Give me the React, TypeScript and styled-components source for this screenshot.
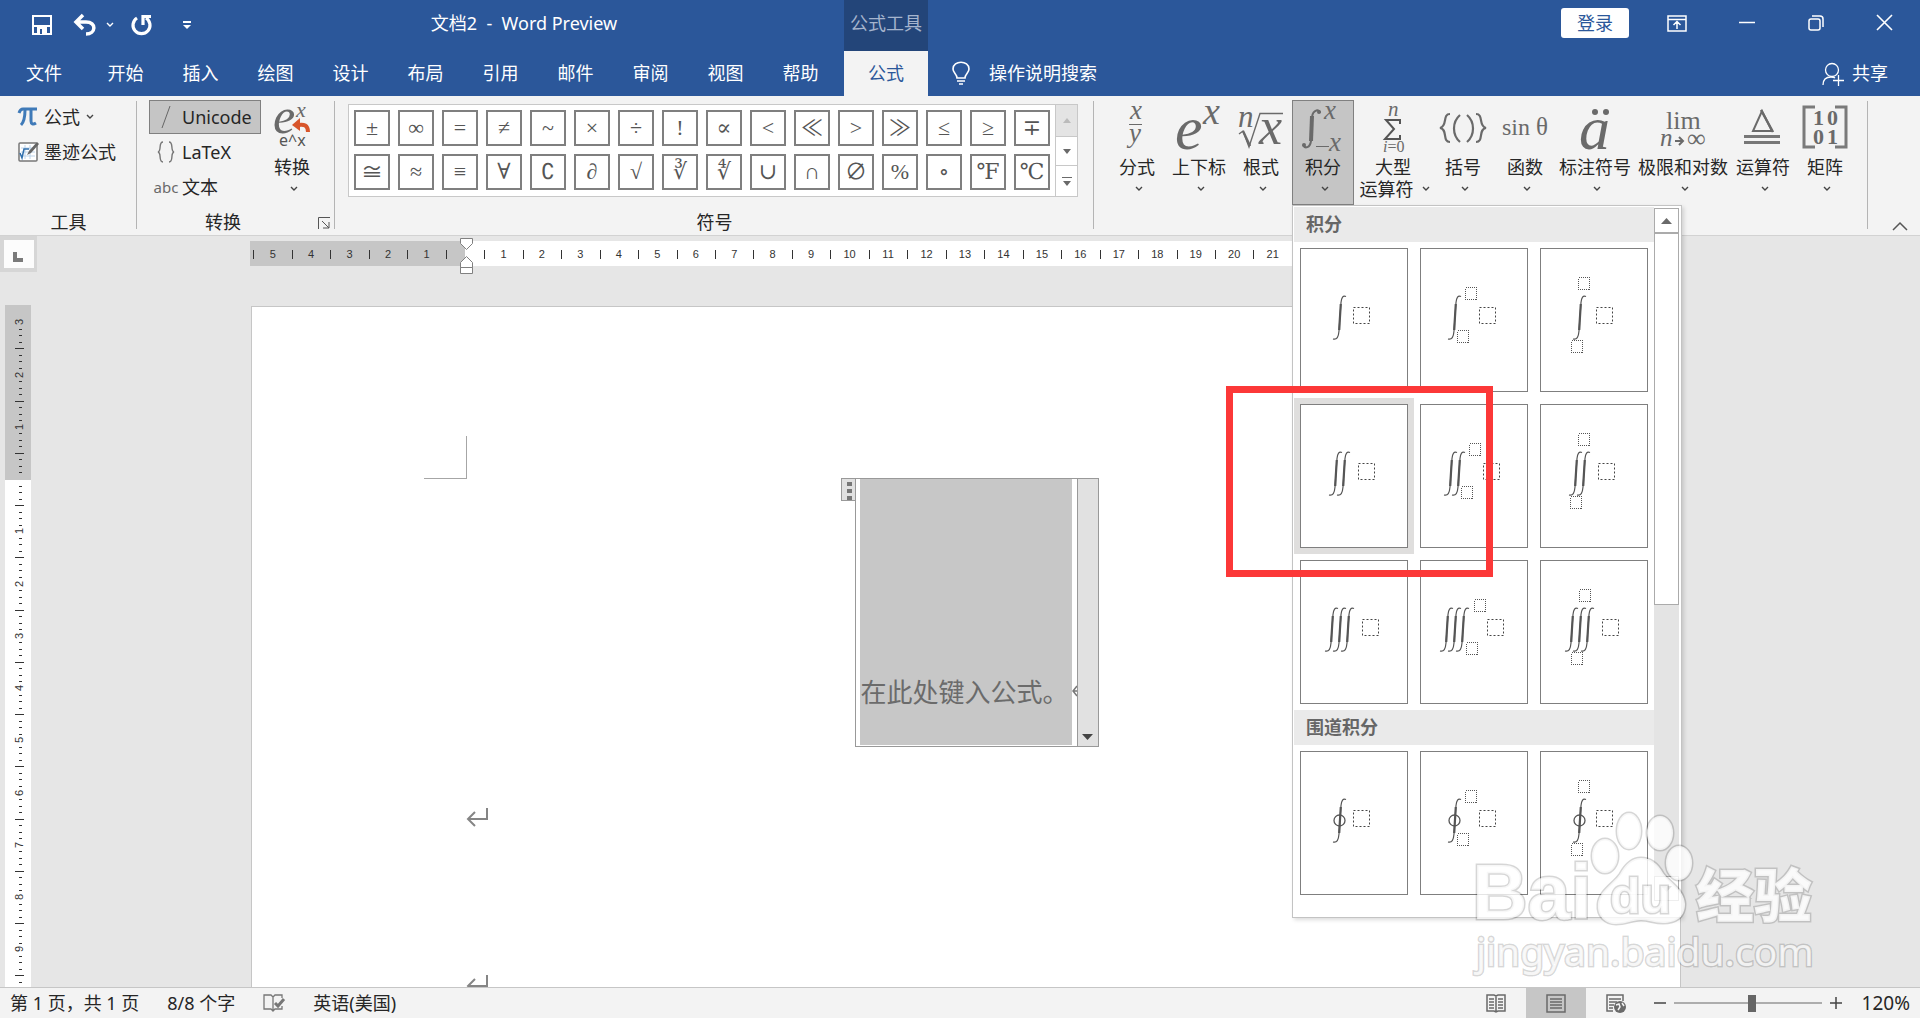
import React from "react";
import styled, { createGlobalStyle, css } from "styled-components";

const UI = `"Noto Sans", "Noto Sans CJK SC", sans-serif`;
const MATH = `"Liberation Serif", "DejaVu Serif", "Noto Sans CJK SC", serif`;

const GlobalStyle = createGlobalStyle`
  * { box-sizing: border-box; }
  body { margin: 0; background: #e6e6e6; }
  button { font: inherit; color: inherit; background: none; border: 0; padding: 0; }
  svg { display: block; flex: none; overflow: visible; }
`;

const App = styled.div`
  display: flex;
  flex-direction: column;
  height: 100vh;
  overflow: hidden;
  position: relative;
  font: 18px/22px ${UI};
  color: #262626;
  white-space: nowrap;
`;

/* ---------- header ---------- */

const TitleBar = styled.header`
  display: flex;
  flex: none;
  height: 51px;
  background: #2b579a;
  color: #fff;
`;

const QuickAccess = styled.div`
  display: flex;
  align-items: center;
  width: 204px;
  padding: 0 12px 2px 32px;
`;

const QuickButton = styled.button<{ $gap: number }>`
  margin-right: ${(p) => p.$gap}px;
`;

const Title = styled.h1`
  width: 640px;
  margin: 0;
  font: 18px/46px ${UI};
  text-align: center;
  white-space: pre;
`;

const ContextLabel = styled.div`
  width: 84px;
  background: #234579;
  color: #a5b4cd;
  line-height: 46px;
  text-align: center;
`;

const WindowControls = styled.div`
  display: flex;
  align-items: center;
  margin-left: auto;
  padding: 0 26px 5px 0;
`;

const Login = styled.button`
  width: 68px;
  height: 30px;
  margin-right: 38px;
  border-radius: 3px;
  background: #fff;
  color: #2b579a;
`;

const WindowButton = styled.button<{ $gap: number }>`
  margin-right: ${(p) => p.$gap}px;
`;

const TabBar = styled.nav`
  display: flex;
  flex: none;
  height: 45px;
  background: #2b579a;
  color: #fff;
`;

const Tab = styled.button<{ $kind?: "file" | "active" }>`
  width: 75px;
  padding-bottom: 2px;
  ${(p) => p.$kind === "file" && css`width: 88px;`}
  ${(p) =>
    p.$kind === "active" &&
    css`
      width: 84px;
      margin-left: 6px;
      background: #f3f3f3;
      color: #2b579a;
    `}
`;

const TellMe = styled.button`
  display: flex;
  align-items: center;
  gap: 19px;
  margin-left: 24px;
  padding-bottom: 2px;
`;

const Share = styled.button`
  display: flex;
  align-items: center;
  gap: 8px;
  margin-left: auto;
  padding: 0 32px 2px 0;
`;

/* ---------- ribbon ---------- */

const Ribbon = styled.section`
  display: flex;
  flex: none;
  height: 140px;
  padding-top: 4px;
  position: relative;
  z-index: 2;
  background: #f3f3f3;
  border-bottom: 1px solid #d2d2d2;
`;

const Group = styled.div<{ $width?: number; $pad: string }>`
  display: flex;
  flex-direction: column;
  position: relative;
  ${(p) => p.$width && css`width: ${p.$width}px;`}
  padding: ${(p) => p.$pad};
  &::after {
    content: "";
    position: absolute;
    right: 0;
    top: 1px;
    height: 128px;
    border-right: 1px solid #b4b4b4;
  }
`;

const GroupBody = styled.div`
  display: flex;
  height: 111px;
`;

const GroupLabel = styled.div<{ $end: number }>`
  padding-right: ${(p) => p.$end}px;
  text-align: center;
  line-height: 22px;
`;

const Stack = styled.div`
  display: flex;
  flex-direction: column;
`;

const RowButton = styled.button<{ $on?: boolean }>`
  display: flex;
  align-items: center;
  height: 34px;
  margin-bottom: 1px;
  gap: 6px;
  border: 1px solid transparent;
  ${(p) =>
    p.$on &&
    css`
      background: #c5c5c5;
      border-color: #808080;
    `}
`;

const ModeIcon = styled.span`
  display: flex;
  justify-content: center;
  width: 32px;
  color: #6a6a6a;
  font-size: 15px;
`;

const ModeRow = styled(RowButton)`
  gap: 0;
  width: 112px;
`;

const BigButton = styled.button<{ $width: number; $on?: boolean }>`
  display: flex;
  flex-direction: column;
  align-items: center;
  flex: none;
  width: ${(p) => p.$width}px;
  height: 105px;
  padding-top: 1px;
  border: 1px solid transparent;
  ${(p) =>
    p.$on &&
    css`
      background: #c5c5c5;
      border-color: #808080;
    `}
`;

const BigIcon = styled.span`
  display: block;
  height: 54px;
`;

const SecondLine = styled.span`
  display: flex;
  align-items: center;
  justify-content: center;
  gap: 8px;
  height: 22px;
  padding-left: 3px;
`;

const Launcher = styled.button`
  position: absolute;
  right: 5px;
  bottom: 6px;
`;

const Gallery = styled.div`
  display: flex;
  width: 730px;
  height: 93px;
  margin-top: 4px;
  background: #fff;
  border: 1px solid #c8c8c8;
`;

const SymbolGrid = styled.div`
  display: grid;
  grid-template-columns: repeat(16, 36px);
  grid-auto-rows: 36px;
  gap: 8px;
  flex: 1;
  padding: 5px;
`;

const SymbolButton = styled.button`
  border: 2px solid #7f7f7f;
  background: #fff;
  color: #555;
  font: 22px/30px ${MATH};
  text-align: center;
  overflow: hidden;
`;

const GallerySide = styled.div`
  display: grid;
  grid-template-rows: 31px 29px 31px;
  width: 23px;
  border-left: 1px solid #c8c8c8;
`;

const GalleryArrow = styled.button<{ $off?: boolean }>`
  display: grid;
  place-items: center;
  background: ${(p) => (p.$off ? "#e4e4e4" : "#fff")};
  & + & { border-top: 1px solid #c8c8c8; }
`;

const MenuHost = styled.div`
  position: relative;
`;

const Collapse = styled.button`
  margin: 121px 12px 0 auto;
  height: 10px;
`;

/* ---------- integral menu ---------- */

const Menu = styled.div`
  position: absolute;
  top: 105px;
  left: 0;
  display: flex;
  width: 390px;
  height: 713px;
  padding: 1px;
  background: #fff;
  border: 1px solid #c3c3c3;
  box-shadow: 2px 2px 4px rgba(0, 0, 0, 0.14);
`;

const MenuList = styled.div`
  width: 360px;
`;

const MenuHeading = styled.h2`
  margin: 0;
  height: 35px;
  padding-left: 12px;
  background: #eaeaea;
  color: #666;
  font: 700 18px/34px ${UI};
`;

const MenuGrid = styled.div`
  display: grid;
  grid-template-columns: repeat(3, 120px);
  grid-auto-rows: 156px;
`;

const MenuItem = styled.button<{ $hot?: boolean }>`
  padding: 6px;
  background: ${(p) => (p.$hot ? "#dfdedd" : "#fff")};
`;

const Preview = styled.svg`
  width: 108px;
  height: 144px;
  background: #fff;
  outline: 1px solid #7f7f7f;
  outline-offset: -1px;
`;

const MenuScroll = styled.div`
  display: flex;
  flex-direction: column;
  width: 25px;
  height: 693px;
  margin-top: 1px;
  background: #e4e4e4;
`;

const ScrollArrow = styled.button`
  display: grid;
  place-items: center;
  height: 25px;
  background: #fff;
  border: 1px solid #ababab;
`;

const ScrollThumb = styled.div`
  height: 372px;
  margin-bottom: auto;
  background: #fff;
  border: 1px solid #ababab;
`;

/* ---------- workspace ---------- */

const Workspace = styled.main`
  display: flex;
  flex: 1;
  min-height: 0;
  overflow: hidden;
  background: #e6e6e6;
`;

const LeftRail = styled.div`
  width: 37px;
  flex: none;
`;

const TabStop = styled.button`
  display: block;
  width: 37px;
  height: 36px;
  padding: 4px 3px 4px 4px;
  background: #d6d6d6;
`;

const TabStopFace = styled.span`
  display: grid;
  place-items: center;
  height: 28px;
  background: #fcfcfc;
  padding: 6px 2px 0 0;
`;

const VerticalRuler = styled.svg`
  margin: 33px 0 0 5px;
`;

const Canvas = styled.div`
  flex: 1;
  min-width: 0;
  padding: 5px 239px 0 213px;
`;

const Page = styled.article`
  height: 720px;
  margin-top: 40px;
  margin-left: 1px;
  padding: 129px 172px 0;
  background: #fff;
  border: 1px solid #c6c6c6;
`;

const CornerMark = styled.div`
  width: 43px;
  height: 43px;
  border: solid #a6a6a6;
  border-width: 0 1px 1px 0;
`;

const Equation = styled.div`
  position: relative;
  display: flex;
  align-items: flex-end;
  width: 223px;
  height: 269px;
  margin: -1px auto 0;
  padding: 0 0 1px 4px;
  border: 1px solid #999;
  background: #fff;
`;

const EquationText = styled.p`
  flex: none;
  width: 212px;
  height: 266px;
  margin: 0;
  padding: 196px 0 0 1px;
  background: #c7c7c7;
  color: #6b6b6b;
  font: 26px/34px ${UI};
`;

const EquationEnd = styled.svg`
  margin-bottom: 49px;
`;

const EquationHandle = styled.button`
  position: absolute;
  top: -1px;
  left: -15px;
  display: flex;
  flex-direction: column;
  align-items: flex-end;
  gap: 3px;
  width: 15px;
  height: 23px;
  padding: 3px 3px 0 0;
  background: #e1e1e1;
  border: 1px solid #999;
`;

const HandleDot = styled.span`
  width: 5px;
  height: 4px;
  background: #777;
`;

const EquationMenu = styled.button`
  position: absolute;
  top: -1px;
  right: -22px;
  display: flex;
  align-items: flex-end;
  justify-content: center;
  width: 22px;
  height: 269px;
  padding-bottom: 6px;
  background: #e1e1e1;
  border: 1px solid #999;
`;

const Pilcrow = styled.div<{ $top: number }>`
  margin: ${(p) => p.$top}px 0 0 43px;
  height: 20px;
`;

/* ---------- status bar ---------- */

const StatusBar = styled.footer`
  display: flex;
  align-items: center;
  flex: none;
  height: 31px;
  padding: 0 10px;
  background: #f3f3f3;
  border-top: 1px solid #c6c6c6;
  position: relative;
  z-index: 1;
`;

const StatusGroup = styled.div`
  display: flex;
  align-items: center;
  gap: 28px;
  margin-right: auto;
`;

const StatusItem = styled.button`
  word-break: keep-all;
`;

const ViewButton = styled.button<{ $on?: boolean }>`
  display: grid;
  place-items: center;
  width: 60px;
  height: 30px;
  background: ${(p) => (p.$on ? "#c6c6c6" : "transparent")};
`;

const ZoomGroup = styled.div`
  display: flex;
  align-items: center;
  margin-left: 8px;
`;

const ZoomStep = styled.button`
  display: grid;
  place-items: center;
  width: 12px;
  height: 30px;
`;

const ZoomSlider = styled.input`
  appearance: none;
  width: 148px;
  height: 18px;
  margin: 0 8px;
  background: linear-gradient(#adadad, #adadad) center / 100% 2px no-repeat;
  &::-webkit-slider-thumb {
    appearance: none;
    width: 8px;
    height: 17px;
    background: #666;
  }
`;

const ZoomValue = styled.button`
  width: 68px;
  font: 19px/22px ${UI};
  text-align: right;
`;

/* ---------- overlays ---------- */

const Highlight = styled.div`
  position: absolute;
  z-index: 3;
  left: 1226px;
  top: 386px;
  width: 267px;
  height: 191px;
  border: 7px solid #fc3838;
  pointer-events: none;
`;

const Watermark = styled.svg`
  position: absolute;
  z-index: 4;
  left: 1470px;
  top: 805px;
  pointer-events: none;
`;

/* ---------- drawings ---------- */

const Chevron = ({ size = 8, color = "#444" }: { size?: number; color?: string }) => (
  <svg width={size} height="6" viewBox="0 0 8 6" fill="none" stroke={color} strokeWidth="1.4">
    <path d="M1 1l3 3 3-3" />
  </svg>
);

const Triangle = ({ up, color = "#6a6a6a", w = 11 }: { up?: boolean; color?: string; w?: number }) => (
  <svg width={w} height={w > 9 ? 6 : 5} viewBox="0 0 10 6" preserveAspectRatio="none" fill={color}>
    <path d={up ? "M0 6L5 0l5 6z" : "M0 0h10L5 6z"} />
  </svg>
);

type GlyphProps = { x: number; y: number; s: number; up?: boolean; fill?: string; children: React.ReactNode };
const G = ({ x, y, s, up, fill = "#6a6a6a", children }: GlyphProps) => (
  <text x={x} y={y} fontSize={s} fontFamily={MATH} fontStyle={up ? "normal" : "italic"} fill={fill}>
    {children}
  </text>
);

const FractionIcon = () => (
  <svg width="20" height="54">
    <G x={3} y={17} s={27}>x</G>
    <path d="M2 22.500h13" stroke="#6a6a6a" />
    <G x={2} y={40} s={27}>y</G>
  </svg>
);
const ScriptIcon = () => (
  <svg width="46" height="54">
    <G x={-1} y={47} s={62}>e</G>
    <G x={27} y={22} s={38}>x</G>
  </svg>
);
const RadicalIcon = () => (
  <svg width="46" height="54">
    <G x={0} y={25} s={31}>n</G>
    <path d="M1 32l4-3 6 16L22 11.500h23" fill="none" stroke="#6a6a6a" strokeWidth="1.400" />
    <path d="M5 29l7 15" stroke="#6a6a6a" strokeWidth="2.400" />
    <G x={21} y={42} s={52}>x</G>
  </svg>
);
const IntegralIcon = () => (
  <svg width="38" height="54">
    <path d="M16 11c0-4-7-4-8 4L7 39c-1 7-6 8-8 4" fill="none" stroke="#6a6a6a" strokeWidth="2" />
    <path d="M8 14L7 39" stroke="#6a6a6a" strokeWidth="4" />
    <circle cx="15" cy="10" r="2" fill="#6a6a6a" />
    <circle cx="0" cy="43" r="2" fill="#6a6a6a" />
    <G x={20} y={17} s={27}>x</G>
    <path d="M12 44.500h13" stroke="#6a6a6a" />
    <G x={25} y={49} s={27}>x</G>
  </svg>
);
const SumIcon = () => (
  <svg width="20" height="54">
    <G x={5} y={14} s={21}>n</G>
    <path d="M17 22v-4H3l8 9-9 10h15v-4" fill="none" stroke="#555" strokeWidth="2" />
    <G x={0} y={50} s={16}>i<tspan fontStyle="normal">=0</tspan></G>
  </svg>
);
const BracketIcon = () => (
  <svg width="48" height="54">
    <g fill="none" stroke="#6a6a6a" strokeWidth="2.200">
      <path d="M11 12c-8 0-2 12-10 14 8 1 2 14 10 14M37 12c8 0 2 12 10 14-8 1-2 14-10 14" />
      <path d="M21 13c-8 7-8 20 0 27M28 13c8 7 8 20 0 27" />
    </g>
  </svg>
);
const SineIcon = () => (
  <svg width="48" height="54">
    <G x={1} y={33} s={24} up>sin</G>
    <G x={35} y={33} s={25} up>θ</G>
  </svg>
);
const AccentIcon = () => (
  <svg width="32" height="54">
    <G x={0} y={47} s={62}>a</G>
    <circle cx="16" cy="10" r="3" fill="#6a6a6a" />
    <circle cx="27" cy="10" r="3" fill="#6a6a6a" />
  </svg>
);
const LimitIcon = () => (
  <svg width="46" height="54">
    <G x={6} y={27} s={26} up>lim</G>
    <G x={0} y={44} s={25}>n</G>
    <path d="M15 39h8m-4-4l4 4-4 4" fill="none" stroke="#6a6a6a" strokeWidth="2" />
    <G x={27} y={45} s={26} up>∞</G>
  </svg>
);
const OperatorIcon = () => (
  <svg width="36" height="54">
    <path d="M8 29h19L17 9z" fill="none" stroke="#6a6a6a" strokeWidth="2" />
    <path d="M16 8l12 22" stroke="#6a6a6a" strokeWidth="2.500" />
    <path d="M-1 34.500h36M-1 40.500h36" stroke="#777" strokeWidth="3" />
  </svg>
);
const MatrixIcon = () => (
  <svg width="46" height="54" fontWeight="700">
    <path d="M13 5H2v40h11M33 5h11v40H33" fill="none" stroke="#7a7a7a" strokeWidth="3" />
    <G x={11} y={23} s={22} up>1</G>
    <G x={25} y={23} s={22} up>0</G>
    <G x={11} y={42} s={22} up>0</G>
    <G x={25} y={42} s={22} up>1</G>
  </svg>
);
const ConvertIcon = () => (
  <svg width="36" height="54">
    <G x={-1} y={31} s={50}>e</G>
    <G x={22} y={15} s={22}>x</G>
    <path d="M34 30c0-7-4-8-10-7" fill="none" stroke="#d8552b" strokeWidth="4" />
    <path d="M18 23l8-7v13z" fill="#d8552b" />
    <text x="5" y="44" fontSize="16" fontFamily={UI} fill="#555">e^x</text>
  </svg>
);
const InkIcon = () => (
  <svg width="20" height="22" fill="none">
    <rect x="1" y="2" width="18" height="18" rx="1" fill="#fff" stroke="#777" strokeWidth="1.500" />
    <path d="M3 7h14M3 11h14M3 15h14M7 4v14M12 4v14" stroke="#bcd3ea" />
    <path d="M2 12l2 5 2-9h5" stroke="#2f6fad" strokeWidth="1.500" />
    <path d="M9 14l2-4L19 1l2 2-8 9z" fill="#666" />
  </svg>
);
const PiIcon = () => (
  <svg width="20" height="20" fill="none" stroke="#3f7ab8">
    <path d="M1 6c1-3 2-4 4-4h14" strokeWidth="3" />
    <path d="M7 3c0 8-1 12-4 15M13 3v11c0 3 2 4 5 2" strokeWidth="3" />
  </svg>
);

/* A ruler unit is one grid character; zero sits at the left indent. */
const UNIT = 38.46;
const HorizontalRuler = () => {
  const zero = 215;
  const marks = Array.from({ length: 32 }, (_, i) => i - 5);
  return (
    <svg width="100%" height="25" fontSize="11" fontFamily={`"Liberation Sans", sans-serif`} textAnchor="middle" fill="#333">
      <rect width="100%" height="25" fill="#fff" />
      <rect width="215" height="25" fill="#c6c6c6" />
      {marks.map((n) => (
        <g key={n}>
          {n !== 0 && <text x={zero + n * UNIT} y="17">{Math.abs(n)}</text>}
          <rect x={Math.round(zero + (n - 0.5) * UNIT)} y="9" width="1" height="9" />
        </g>
      ))}
      <g fill="#fff" stroke="#808080">
        <path d="M210.500-2.500h12v5l-6 6-6-6zM210.500 26.500v-5l6-6 6 6v5zM210.500 26.500h12v6h-12z" />
      </g>
    </svg>
  );
};

const VERTICAL_UNIT = 52.25;
const VerticalScale = () => {
  const zero = 174;
  const steps = Array.from({ length: 102 }, (_, i) => i - 24).filter((s) => s !== 0);
  return (
    <VerticalRuler width="26" height="683" fontSize="11" fontFamily={`"Liberation Sans", sans-serif`} textAnchor="middle" fill="#333">
      <rect width="26" height="683" fill="#fff" />
      <rect width="26" height="175" fill="#c6c6c6" />
      {steps.map((s) => {
        const y = Math.round(zero + (s * VERTICAL_UNIT) / 8);
        if (s % 8 === 0) {
          return <text key={s} transform={`translate(18 ${y}) rotate(-90)`}>{Math.abs(s / 8)}</text>;
        }
        return s % 4 === 0 ? (
          <rect key={s} x="10" y={y} width="9" height="1" />
        ) : (
          <rect key={s} x="14" y={y} width="3" height="1" />
        );
      })}
    </VerticalRuler>
  );
};

const ReturnMark = () => (
  <svg width="22" height="20" fill="none" stroke="#858585" strokeWidth="2">
    <path d="M20 0v11H1M8 4l-7 7 7 7" />
  </svg>
);

/* ---------- data ---------- */

const tabs = ["开始", "插入", "绘图", "设计", "布局", "引用", "邮件", "审阅", "视图", "帮助"];

const symbols = [
  "±", "∞", "=", "≠", "~", "×", "÷", "!", "∝", "<", "≪", ">", "≫", "≤", "≥", "∓",
  "≅", "≈", "≡", "∀", "∁", "∂", "√", "∛", "∜", "∪", "∩", "∅", "%", "∘", "℉", "℃",
];

type Shape = {
  id: string;
  label: string;
  signs: number[];
  box: number;
  small?: [number, number][];
  ring?: boolean;
  hot?: boolean;
};

const plain: Shape[] = [
  { id: "a1", label: "积分", signs: [33], box: 53 },
  { id: "a2", label: "积分 上下限", signs: [28], box: 59, small: [[45, 39], [37, 82]] },
  { id: "a3", label: "积分 堆积极限", signs: [33], box: 56, small: [[38, 29], [31, 92]] },
  { id: "b1", label: "二重积分", signs: [29, 37], box: 58, hot: true },
  { id: "b2", label: "二重积分 上下限", signs: [24, 32], box: 63, small: [[49, 39], [41, 82]] },
  { id: "b3", label: "二重积分 堆积极限", signs: [29, 37], box: 58, small: [[38, 29], [30, 92]] },
  { id: "c1", label: "三重积分", signs: [25, 33, 41], box: 62 },
  { id: "c2", label: "三重积分 上下限", signs: [20, 28, 36], box: 67, small: [[54, 39], [46, 82]] },
  { id: "c3", label: "三重积分 堆积极限", signs: [25, 33, 41], box: 62, small: [[39, 29], [31, 92]] },
];
const contour: Shape[] = plain.slice(0, 3).map((s) => ({ ...s, id: "r" + s.id, label: "围道" + s.label, ring: true }));

const IntegralPreview = ({ shape }: { shape: Shape }) => (
  <Preview fill="none" stroke="#555">
    {shape.signs.map((x) => (
      <g key={x} transform={`translate(${x} 47)`}>
        <path d="M13 1.500c-3-1.500-4.500 1-5 6L6 36c-.5 6-2 9-6 8" strokeWidth="1.200" />
        <path d="M7.800 9L6.200 35" strokeWidth="2.200" />
      </g>
    ))}
    {shape.ring && <circle cx={shape.signs[0] + 6.5} cy="69.500" r="5.500" strokeWidth="1.300" />}
    <rect x={shape.box + 0.5} y="59.500" width="16" height="16" stroke="#444" strokeDasharray="2 2" />
    {shape.small?.map(([x, y]) => (
      <rect key={y} x={x + 0.5} y={y + 0.5} width="11" height="12" stroke="#555" strokeDasharray="1 1" shapeRendering="crispEdges" />
    ))}
  </Preview>
);

const IntegralItems = ({ items }: { items: Shape[] }) => (
  <MenuGrid>
    {items.map((s) => (
      <MenuItem key={s.id} $hot={s.hot} aria-label={s.label}>
        <IntegralPreview shape={s} />
      </MenuItem>
    ))}
  </MenuGrid>
);

type Structure = { label: string; second?: string; width: number; icon: React.ReactNode; on?: boolean };
const structures: Structure[] = [
  { label: "分式", width: 62, icon: <FractionIcon /> },
  { label: "上下标", width: 62, icon: <ScriptIcon /> },
  { label: "根式", width: 62, icon: <RadicalIcon /> },
  { label: "积分", width: 62, icon: <IntegralIcon />, on: true },
  { label: "大型", second: "运算符", width: 78, icon: <SumIcon /> },
  { label: "括号", width: 62, icon: <BracketIcon /> },
  { label: "函数", width: 62, icon: <SineIcon /> },
  { label: "标注符号", width: 78, icon: <AccentIcon /> },
  { label: "极限和对数", width: 98, icon: <LimitIcon /> },
  { label: "运算符", width: 62, icon: <OperatorIcon /> },
  { label: "矩阵", width: 62, icon: <MatrixIcon /> },
];

const StructureButton = ({ item }: { item: Structure }) => (
  <BigButton $width={item.width} $on={item.on} aria-expanded={!!item.on}>
    <BigIcon>{item.icon}</BigIcon>
    <span>{item.label}</span>
    <SecondLine>
      {item.second}
      <Chevron />
    </SecondLine>
  </BigButton>
);

export default function WordWindow() {
  return (
    <App>
      <GlobalStyle />
      <TitleBar>
        <QuickAccess>
          <QuickButton $gap={22} aria-label="保存">
            <svg width="20" height="20" fill="none" stroke="#fff" strokeWidth="2">
              <path d="M1 1h18v18H1zM2 11h16" />
              <path d="M5 12h10v7H5z" fill="#fff" stroke="none" />
              <path d="M8 14h2v5H8z" fill="#2b579a" stroke="none" />
            </svg>
          </QuickButton>
          <QuickButton $gap={10} aria-label="撤消">
            <svg width="22" height="20" fill="none" stroke="#fff" strokeWidth="3.500">
              <path d="M2 7h10c11 0 10 12 0 12M9 0L2 7l7 7" />
            </svg>
          </QuickButton>
          <QuickButton $gap={17} aria-label="撤消列表"><Chevron color="#fff" /></QuickButton>
          <QuickButton $gap={31} aria-label="重复">
            <svg width="21" height="20" fill="none" stroke="#fff" strokeWidth="3.200">
              <path d="M6 3a8.500 8.500 0 1 0 9 0M12 10V1.500h8" />
            </svg>
          </QuickButton>
          <QuickButton $gap={0} aria-label="自定义快速访问工具栏">
            <svg width="8" height="8" fill="#fff"><path d="M0 0h8v2H0zM0 4h8L4 8z" /></svg>
          </QuickButton>
        </QuickAccess>
        <Title>{"文档2  -  Word Preview"}</Title>
        <ContextLabel>公式工具</ContextLabel>
        <WindowControls>
          <Login>登录</Login>
          <WindowButton $gap={52} aria-label="功能区显示选项">
            <svg width="20" height="17" fill="none" stroke="#fff" strokeWidth="1.500">
              <path d="M1 1h18v15H1zM1 4.500h18M10 14V7M6.500 10L10 6.500 13.500 10" />
            </svg>
          </WindowButton>
          <WindowButton $gap={52} aria-label="最小化">
            <svg width="17" height="16" stroke="#fff" strokeWidth="1.500"><path d="M0 7.500h16" /></svg>
          </WindowButton>
          <WindowButton $gap={52} aria-label="还原">
            <svg width="17" height="16" fill="none" stroke="#fff" strokeWidth="1.500">
              <rect x="1" y="4" width="11" height="11" rx="2" />
              <path d="M4 1h8c2 0 3 1 3 3v8" />
            </svg>
          </WindowButton>
          <WindowButton $gap={0} aria-label="关闭">
            <svg width="17" height="16" stroke="#fff" strokeWidth="1.600"><path d="M0 0l15 15M15 0L0 15" /></svg>
          </WindowButton>
        </WindowControls>
      </TitleBar>
      <TabBar>
        <Tab $kind="file">文件</Tab>
        {tabs.map((t) => <Tab key={t}>{t}</Tab>)}
        <Tab $kind="active">公式</Tab>
        <TellMe>
          <svg width="18" height="24" fill="none" stroke="#fff" strokeWidth="1.600">
            <path d="M5 17c0-4-4-5-4-9 0-9 16-9 16 0 0 4-4 5-4 9zM5 20h8M7 23h4" />
          </svg>
          操作说明搜索
        </TellMe>
        <Share>
          <svg width="22" height="20" fill="none" stroke="#fff" strokeWidth="1.300">
            <circle cx="10" cy="7" r="6.500" />
            <path d="M1 22c0-5 3-8 8-8 2 0 3 0 4 1M16.500 12v11M11 17.500h11" />
          </svg>
          共享
        </Share>
      </TabBar>

      <Ribbon>
        <Group $width={137} $pad="0 0 0 17px">
          <GroupBody>
            <Stack>
              <RowButton><PiIcon />公式<Chevron /></RowButton>
              <RowButton><InkIcon />墨迹公式</RowButton>
            </Stack>
          </GroupBody>
          <GroupLabel $end={17}>工具</GroupLabel>
        </Group>

        <Group $width={198} $pad="0 0 0 12px">
          <GroupBody>
            <Stack>
              <ModeRow $on>
                <ModeIcon>
                  <svg width="10" height="22" stroke="#666"><path d="M1 22L9 0" /></svg>
                </ModeIcon>
                Unicode
              </ModeRow>
              <ModeRow>
                <ModeIcon>
                  <svg width="18" height="22" fill="none" stroke="#777" strokeWidth="1.400">
                    <path d="M6 1c-5 0-1 9-5 10 4 1 0 10 5 10M12 1c5 0 1 9 5 10-4 1 0 10-5 10" />
                  </svg>
                </ModeIcon>
                LaTeX
              </ModeRow>
              <ModeRow><ModeIcon>abc</ModeIcon>文本</ModeRow>
            </Stack>
            <BigButton $width={62}>
              <BigIcon><ConvertIcon /></BigIcon>
              <span>转换</span>
              <SecondLine><Chevron /></SecondLine>
            </BigButton>
          </GroupBody>
          <GroupLabel $end={38}>转换</GroupLabel>
          <Launcher aria-label="转换设置">
            <svg width="12" height="12" fill="none" stroke="#555"><path d="M.5 12V.5H12M4 4l7 7M11 5v6H5" /></svg>
          </Launcher>
        </Group>

        <Group $width={759} $pad="0 0 0 13px">
          <GroupBody>
            <Gallery>
              <SymbolGrid>
                {symbols.map((s) => <SymbolButton key={s}>{s}</SymbolButton>)}
              </SymbolGrid>
              <GallerySide>
                <GalleryArrow $off aria-label="上一行"><Triangle up w={8} color="#bbb" /></GalleryArrow>
                <GalleryArrow aria-label="下一行"><Triangle w={8} /></GalleryArrow>
                <GalleryArrow aria-label="其他符号">
                  <svg width="10" height="9" fill="#6a6a6a"><path d="M0 0h10v1H0zM1 4h8L5 9z" /></svg>
                </GalleryArrow>
              </GallerySide>
            </Gallery>
          </GroupBody>
          <GroupLabel $end={13}>符号</GroupLabel>
        </Group>

        <Group $pad="0 12px 0 12px">
          <GroupBody>
            {structures.map((item) =>
              item.on ? (
                <MenuHost key={item.label}>
                  <StructureButton item={item} />
                  <Menu>
                    <MenuList>
                      <MenuHeading>积分</MenuHeading>
                      <IntegralItems items={plain} />
                      <MenuHeading>围道积分</MenuHeading>
                      <IntegralItems items={contour} />
                    </MenuList>
                    <MenuScroll>
                      <ScrollArrow aria-label="向上滚动"><Triangle up /></ScrollArrow>
                      <ScrollThumb />
                      <ScrollArrow aria-label="向下滚动"><Triangle /></ScrollArrow>
                    </MenuScroll>
                  </Menu>
                </MenuHost>
              ) : (
                <StructureButton key={item.label + item.width} item={item} />
              )
            )}
          </GroupBody>
        </Group>
        <Collapse aria-label="折叠功能区">
          <svg width="16" height="8" fill="none" stroke="#555" strokeWidth="1.500"><path d="M1 8l7-7 7 7" /></svg>
        </Collapse>
      </Ribbon>

      <Workspace>
        <LeftRail>
          <TabStop aria-label="左对齐制表符">
            <TabStopFace>
              <svg width="10" height="10" fill="#7a7a7a"><path d="M0 0h4v6h6v4H0z" /></svg>
            </TabStopFace>
          </TabStop>
          <VerticalScale />
        </LeftRail>
        <Canvas>
          <HorizontalRuler />
          <Page>
            <CornerMark />
            <Equation>
              <EquationHandle aria-label="移动公式">
                <HandleDot /><HandleDot /><HandleDot />
              </EquationHandle>
              <EquationText>在此处键入公式。</EquationText>
              <EquationEnd width="5" height="10" fill="none" stroke="#777" strokeWidth="1.500">
                <path d="M5 0L1 5l4 5M1 5h4" />
              </EquationEnd>
              <EquationMenu aria-label="公式选项"><Triangle color="#444" /></EquationMenu>
            </Equation>
            <Pilcrow $top={61}><ReturnMark /></Pilcrow>
            <Pilcrow $top={147}><ReturnMark /></Pilcrow>
          </Page>
        </Canvas>
      </Workspace>

      <StatusBar>
        <StatusGroup>
          <StatusItem>第 1 页，共 1 页</StatusItem>
          <StatusItem>8/8 个字</StatusItem>
          <StatusItem aria-label="校对">
            <svg width="22" height="18" fill="none" stroke="#777" strokeWidth="1.300">
              <path d="M10 3L8 1H1v14h7l2 2 2-2h7v-3M10 3v14M10 3l2-2h7v3" />
              <path d="M12 9l3 3 6-7" strokeWidth="3" />
            </svg>
          </StatusItem>
          <StatusItem>英语(美国)</StatusItem>
        </StatusGroup>
        <ViewButton aria-label="阅读视图">
          <svg width="20" height="19" fill="none" stroke="#6a6a6a" strokeWidth="1.500">
            <path d="M1 1h7l2 1 2-1h7v16h-7l-2 1-2-1H1zM10 2v16M3 5h5M3 8h5M3 11h5M3 14h5M12 5h5M12 8h5M12 11h5M12 14h5" />
          </svg>
        </ViewButton>
        <ViewButton $on aria-label="页面视图">
          <svg width="20" height="19" fill="none" stroke="#6a6a6a" strokeWidth="1.500">
            <path d="M1 1h18v17H1zM4 5h12M4 8h12M4 11h12M4 14h12" />
          </svg>
        </ViewButton>
        <ViewButton aria-label="Web 版式视图">
          <svg width="20" height="19" fill="none" stroke="#6a6a6a" strokeWidth="1.500">
            <path d="M7 17H1V1h16v6M3 5h12M3 8h8M3 11h5M3 14h4" />
            <circle cx="14" cy="13" r="6" fill="#6a6a6a" stroke="none" />
            <path d="M10 11l3-1 1 3-2 3M16 9l2 3" stroke="#f3f3f3" />
          </svg>
        </ViewButton>
        <ZoomGroup>
          <ZoomStep aria-label="缩小">
            <svg width="12" height="12" stroke="#444" strokeWidth="1.500"><path d="M0 6h12" /></svg>
          </ZoomStep>
          <ZoomSlider type="range" aria-label="显示比例" min={0} max={100} defaultValue={53} />
          <ZoomStep aria-label="放大">
            <svg width="12" height="12" stroke="#444" strokeWidth="1.500"><path d="M0 6h12M6 0v12" /></svg>
          </ZoomStep>
          <ZoomValue>120%</ZoomValue>
        </ZoomGroup>
      </StatusBar>

      <Highlight />
      <Watermark width="350" height="180" fill="#fff" fillOpacity="0.8" stroke="#000" strokeOpacity="0.16" strokeWidth="3" paintOrder="stroke">
        <g fontWeight="700" fontFamily={`"Liberation Sans", sans-serif`}>
          <text x="2" y="114" fontSize="77">Bai</text>
          <ellipse cx="135" cy="51" rx="13" ry="17" />
          <ellipse cx="159" cy="26" rx="12" ry="18" />
          <ellipse cx="190" cy="28" rx="13" ry="17" />
          <ellipse cx="209" cy="58" rx="13" ry="17" />
          <path d="M171 53c10 0 17 6 22 15 7 10 21 16 22 31 0 13-9 19-22 19-9 0-14-3-22-3s-15 4-25 4c-11 0-19-8-18-20 1-13 15-20 22-30 5-9 11-16 21-16z" />
          <text x="140" y="108" fontSize="50">du</text>
          <text x="226" y="112" fontSize="58" fontWeight="900" fontFamily={`"Noto Sans CJK SC", sans-serif`}>经验</text>
        </g>
        <text x="6" y="161" fontSize="39" fontFamily={UI}>jingyan.baidu.com</text>
      </Watermark>
    </App>
  );
}
